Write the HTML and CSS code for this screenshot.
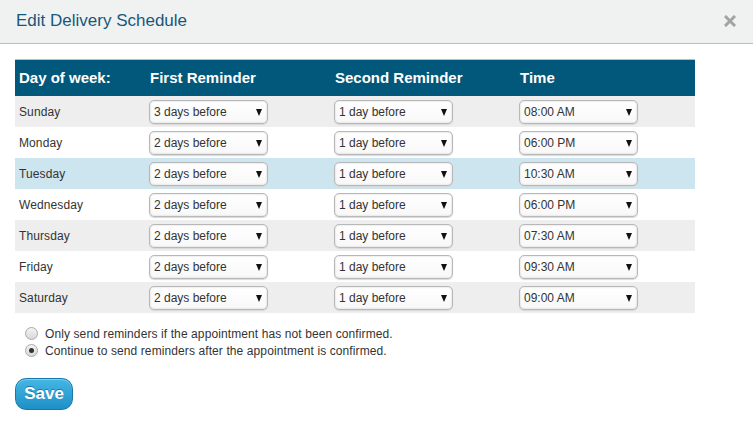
FILE: index.html
```html
<!DOCTYPE html>
<html lang="en">
<head>
    <meta charset="UTF-8">
    <title>Edit Delivery Schedule</title>
    <link rel="stylesheet" href="styles.css">
</head>
<body>
    <div class="modal-header">
        <h2>Edit Delivery Schedule</h2>
        <svg class="close" width="12" height="12" viewBox="0 0 12 12">
            <path d="M2 2 L10 10 M10 2 L2 10" stroke="#a3a3a3" stroke-width="3" stroke-linecap="square"/>
        </svg>
    </div>

    <div class="modal-body">
        <table class="schedule">
            <thead>
                <tr>
                    <th class="col-day">Day of week:</th>
                    <th class="col-first">First Reminder</th>
                    <th class="col-second">Second Reminder</th>
                    <th class="col-time">Time</th>
                </tr>
            </thead>
            <tbody>
                <tr class="odd">
                    <td>Sunday</td>
                    <td><span class="select-wrap"><select><option>3 days before</option></select></span></td>
                    <td><span class="select-wrap"><select><option>1 day before</option></select></span></td>
                    <td><span class="select-wrap"><select><option>08:00 AM</option></select></span></td>
                </tr>
                <tr>
                    <td>Monday</td>
                    <td><span class="select-wrap"><select><option>2 days before</option></select></span></td>
                    <td><span class="select-wrap"><select><option>1 day before</option></select></span></td>
                    <td><span class="select-wrap"><select><option>06:00 PM</option></select></span></td>
                </tr>
                <tr class="active">
                    <td>Tuesday</td>
                    <td><span class="select-wrap"><select><option>2 days before</option></select></span></td>
                    <td><span class="select-wrap"><select><option>1 day before</option></select></span></td>
                    <td><span class="select-wrap"><select><option>10:30 AM</option></select></span></td>
                </tr>
                <tr>
                    <td>Wednesday</td>
                    <td><span class="select-wrap"><select><option>2 days before</option></select></span></td>
                    <td><span class="select-wrap"><select><option>1 day before</option></select></span></td>
                    <td><span class="select-wrap"><select><option>06:00 PM</option></select></span></td>
                </tr>
                <tr class="odd">
                    <td>Thursday</td>
                    <td><span class="select-wrap"><select><option>2 days before</option></select></span></td>
                    <td><span class="select-wrap"><select><option>1 day before</option></select></span></td>
                    <td><span class="select-wrap"><select><option>07:30 AM</option></select></span></td>
                </tr>
                <tr>
                    <td>Friday</td>
                    <td><span class="select-wrap"><select><option>2 days before</option></select></span></td>
                    <td><span class="select-wrap"><select><option>1 day before</option></select></span></td>
                    <td><span class="select-wrap"><select><option>09:30 AM</option></select></span></td>
                </tr>
                <tr class="odd">
                    <td>Saturday</td>
                    <td><span class="select-wrap"><select><option>2 days before</option></select></span></td>
                    <td><span class="select-wrap"><select><option>1 day before</option></select></span></td>
                    <td><span class="select-wrap"><select><option>09:00 AM</option></select></span></td>
                </tr>
            </tbody>
        </table>

        <!-- Reminder options -->
        <div class="options">
            <label class="option"><span class="radio"></span>Only send reminders if the appointment has not been confirmed.</label>
            <label class="option"><span class="radio checked"></span>Continue to send reminders after the appointment is confirmed.</label>
        </div>

        <button class="save">Save</button>
    </div>
</body>
</html>
```

FILE: styles.css
```css
body {
    margin: 0;
    font-family: Arial, "Liberation Sans", sans-serif;
    background-color: #fff;
    color: #333;
}

.modal-header {
    height: 43px;
    background-color: #f0f2f2;
    border-bottom: 1px solid #bdbdbd;
    display: flex;
    align-items: center;
    justify-content: space-between;
    padding: 0 17px 0 16px;
}

.modal-header h2 {
    margin: 0;
    font-size: 17px;
    font-weight: normal;
    color: #17587a;
    padding-bottom: 2px;
}

.close {
    display: block;
    margin-bottom: 2px;
}

.modal-body {
    padding: 15px 15px 0 15px;
}

.schedule {
    width: 680px;
    border-collapse: collapse;
    border-top: 1px solid #bdbdbd;
}

.schedule th {
    background-color: #02587a;
    color: #fff;
    font-size: 15px;
    font-weight: bold;
    text-align: left;
    height: 34px;
    padding: 0 0 2px 4px;
    vertical-align: middle;
}

.schedule th + th {
    padding-left: 5px;
}

.col-day { width: 126px; }
.col-first { width: 180px; }
.col-second { width: 180px; }

.schedule td {
    height: 31px;
    padding: 0 0 0 4px;
    font-size: 12px;
    letter-spacing: 0.1px;
    vertical-align: middle;
}

.schedule tr.odd td {
    background-color: #eeeeee;
}

.schedule tr.active td {
    background-color: #cde5ef;
}

.select-wrap {
    position: relative;
    display: inline-block;
    vertical-align: middle;
}

.select-wrap::after {
    content: "";
    position: absolute;
    right: 6px;
    top: 9px;
    border-left: 3.5px solid transparent;
    border-right: 3.5px solid transparent;
    border-top: 7px solid #111;
    pointer-events: none;
}

.select-wrap select {
    -webkit-appearance: none;
    appearance: none;
    width: 119px;
    height: 24px;
    margin: 0;
    padding: 0 0 0 4px;
    font-family: Arial, "Liberation Sans", sans-serif;
    font-size: 12px;
    color: #333;
    background: linear-gradient(#ffffff, #f8f8f8);
    border: 1px solid #b8b8b8;
    border-radius: 5px;
    box-shadow: inset 0 0 2px #c8c8c8, 0 1px 1px #d8d8d8;
}

.options {
    margin-top: 12px;
    padding-left: 10px;
}

.option {
    display: flex;
    align-items: center;
    font-size: 12px;
    letter-spacing: 0.1px;
    color: #333;
    height: 17px;
}

.radio {
    width: 11px;
    height: 11px;
    border: 1px solid #a8a8a8;
    border-radius: 50%;
    background: linear-gradient(#f4f4f4, #d8d8d8);
    margin-right: 7px;
    box-sizing: content-box;
    position: relative;
}

.radio.checked::after {
    content: "";
    position: absolute;
    left: 3px;
    top: 3px;
    width: 5px;
    height: 5px;
    border-radius: 50%;
    background-color: #333;
}

.save {
    margin-top: 19px;
    width: 58px;
    height: 32px;
    padding: 0;
    font-family: Arial, "Liberation Sans", sans-serif;
    font-size: 17px;
    font-weight: bold;
    color: #fff;
    background: linear-gradient(#45b6e4, #1e90c6);
    border: 1px solid #1679a8;
    border-radius: 11px;
    box-shadow: inset 0 1px 0 #7cd0f0;
    text-shadow: 0 -1px 0 #1b77a4;
    cursor: pointer;
}
```
